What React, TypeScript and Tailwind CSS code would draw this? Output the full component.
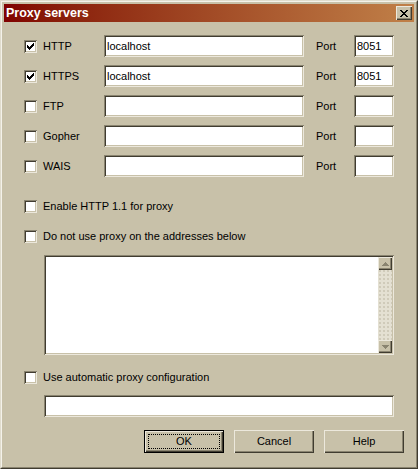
import React from "react";

const FACE = "bg-[#c8c1a9]";

function Check() {
  // 7x7 Win2k style tick
  const px: [number, number][] = [
    [6, 0],
    [5, 1], [6, 1],
    [0, 2], [4, 2], [5, 2], [6, 2],
    [0, 3], [1, 3], [3, 3], [4, 3], [5, 3],
    [0, 4], [1, 4], [2, 4], [3, 4], [4, 4],
    [1, 5], [2, 5], [3, 5],
    [2, 6],
  ];
  return (
    <svg width="7" height="7" viewBox="0 0 7 7" shapeRendering="crispEdges">
      {px.map(([x, y]) => (
        <rect key={`${x}-${y}`} x={x} y={y} width="1" height="1" fill="#000" />
      ))}
    </svg>
  );
}

function CloseGlyph() {
  // rows of the little 8x7 "x"
  const rows = [
    [0, 1, 6, 7],
    [1, 2, 5, 6],
    [2, 3, 4, 5],
    [3, 4],
    [2, 3, 4, 5],
    [1, 2, 5, 6],
    [0, 1, 6, 7],
  ];
  return (
    <svg width="8" height="7" viewBox="0 0 8 7" shapeRendering="crispEdges">
      {rows.flatMap((cols, y) =>
        cols.map((x) => <rect key={`${x}-${y}`} x={x} y={y} width="1" height="1" fill="#000" />)
      )}
    </svg>
  );
}

function Checkbox({ checked }: { checked?: boolean }) {
  return (
    <span className="flex h-[13px] w-[13px] shrink-0 items-center justify-center bg-white shadow-[inset_1px_1px_#8a8470,inset_-1px_-1px_#ece8dc,inset_2px_2px_#403c30,inset_-2px_-2px_#c8c1a9]">
      {checked && <Check />}
    </span>
  );
}

function TextBox({ value, className }: { value?: string; className: string }) {
  return (
    <div
      className={`flex items-center bg-white pl-[3px] text-[11px] text-black shadow-[inset_1px_1px_#8a8470,inset_-1px_-1px_#ece8dc,inset_2px_2px_#403c30,inset_-2px_-2px_#c8c1a9] ${className}`}
    >
      {value}
    </div>
  );
}

function Button({ label, isDefault }: { label: string; isDefault?: boolean }) {
  if (isDefault) {
    return (
      <div className="h-[23px] w-[80px] border border-black">
        <div className="flex h-full w-full p-[3px] shadow-[inset_1px_1px_#ece8dc,inset_-1px_-1px_#403c30,inset_-2px_-2px_#8a8470]">
          <span className="flex flex-1 items-center justify-center border border-dotted border-black text-[11px]">
            {label}
          </span>
        </div>
      </div>
    );
  }
  return (
    <div className="flex h-[23px] w-[80px] items-center justify-center text-[11px] shadow-[inset_1px_1px_#ece8dc,inset_-1px_-1px_#403c30,inset_-2px_-2px_#8a8470]">
      {label}
    </div>
  );
}

function ArrowButton({ up }: { up?: boolean }) {
  return (
    <div className={`flex h-[13px] w-[14px] items-center justify-center ${FACE} shadow-[inset_1px_1px_#ece8dc,inset_-1px_-1px_#403c30,inset_-2px_-2px_#8a8470]`}>
      <svg width="7" height="4" viewBox="0 0 7 4" shapeRendering="crispEdges">
        {up ? (
          <polygon points="3.5,0 7,4 0,4" fill="#8a8470" />
        ) : (
          <polygon points="0,0 7,0 3.5,4" fill="#8a8470" />
        )}
      </svg>
    </div>
  );
}

const proxies = [
  { name: "HTTP", checked: true, host: "localhost", port: "8051" },
  { name: "HTTPS", checked: true, host: "localhost", port: "8051" },
  { name: "FTP", checked: false, host: "", port: "" },
  { name: "Gopher", checked: false, host: "", port: "" },
  { name: "WAIS", checked: false, host: "", port: "" },
];

export default function App() {
  return (
    <div
      className="h-[469px] w-[418px] border border-t-[#e0dccd] border-l-[#e0dccd] border-r-[#403c30] border-b-[#403c30] text-black"
      style={{ fontFamily: '"Liberation Sans", Arial, sans-serif' }}
    >
      <div className={`flex h-full w-full flex-col border border-t-[#f4f2ea] border-l-[#f4f2ea] border-r-[#8a8470] border-b-[#8a8470] p-[2px] ${FACE}`}>
        {/* title bar */}
        <div className="flex h-[18px] shrink-0 items-center justify-between bg-gradient-to-r from-[#800000] to-[#c08048] pl-[2px] pr-[2px]">
          <span className="text-[12.5px] font-bold text-white">Proxy servers</span>
          <div className={`flex h-[14px] w-[16px] items-center justify-center ${FACE} shadow-[inset_1px_1px_#ece8dc,inset_-1px_-1px_#403c30,inset_-2px_-2px_#8a8470]`}>
            <CloseGlyph />
          </div>
        </div>

        <div className="flex flex-col pl-[20px] pt-[13px]">
          <div className="flex flex-col gap-[8px]">
            {proxies.map((p) => (
              <div key={p.name} className="flex h-[22px] items-center">
                <div className="flex w-[80px] items-center text-[11px]">
                  <Checkbox checked={p.checked} />
                  <span className="ml-[6px]">{p.name}</span>
                </div>
                <TextBox value={p.host} className="h-[22px] w-[200px]" />
                <span className="ml-[12px] w-[38px] text-[11px]">Port</span>
                <TextBox value={p.port} className="h-[22px] w-[40px]" />
              </div>
            ))}
          </div>

          <div className="mt-[23px] flex h-[13px] items-center text-[11px]">
            <Checkbox />
            <span className="ml-[6px]">Enable HTTP 1.1 for proxy</span>
          </div>

          <div className="mt-[17px] flex h-[13px] items-center text-[11px]">
            <Checkbox />
            <span className="ml-[6px]">Do not use proxy on the addresses below</span>
          </div>

          <div className="ml-[20px] mt-[12px] flex h-[100px] w-[350px] justify-end bg-white p-[2px] shadow-[inset_1px_1px_#8a8470,inset_-1px_-1px_#ece8dc,inset_2px_2px_#403c30,inset_-2px_-2px_#c8c1a9]">
            <div className="flex w-[14px] flex-col justify-between bg-[#e4e0d2] bg-[radial-gradient(circle,#b8b29c_0.6px,transparent_0.8px)] bg-[length:4px_4px]">
              <ArrowButton up />
              <ArrowButton />
            </div>
          </div>

          <div className="mt-[16px] flex h-[13px] items-center text-[11px]">
            <Checkbox />
            <span className="ml-[6px]">Use automatic proxy configuration</span>
          </div>

          <TextBox className="ml-[20px] mt-[11px] h-[22px] w-[350px]" />

          <div className="mt-[13px] flex gap-[10px] pl-[120px]">
            <Button label="OK" isDefault />
            <Button label="Cancel" />
            <Button label="Help" />
          </div>
        </div>
      </div>
    </div>
  );
}
